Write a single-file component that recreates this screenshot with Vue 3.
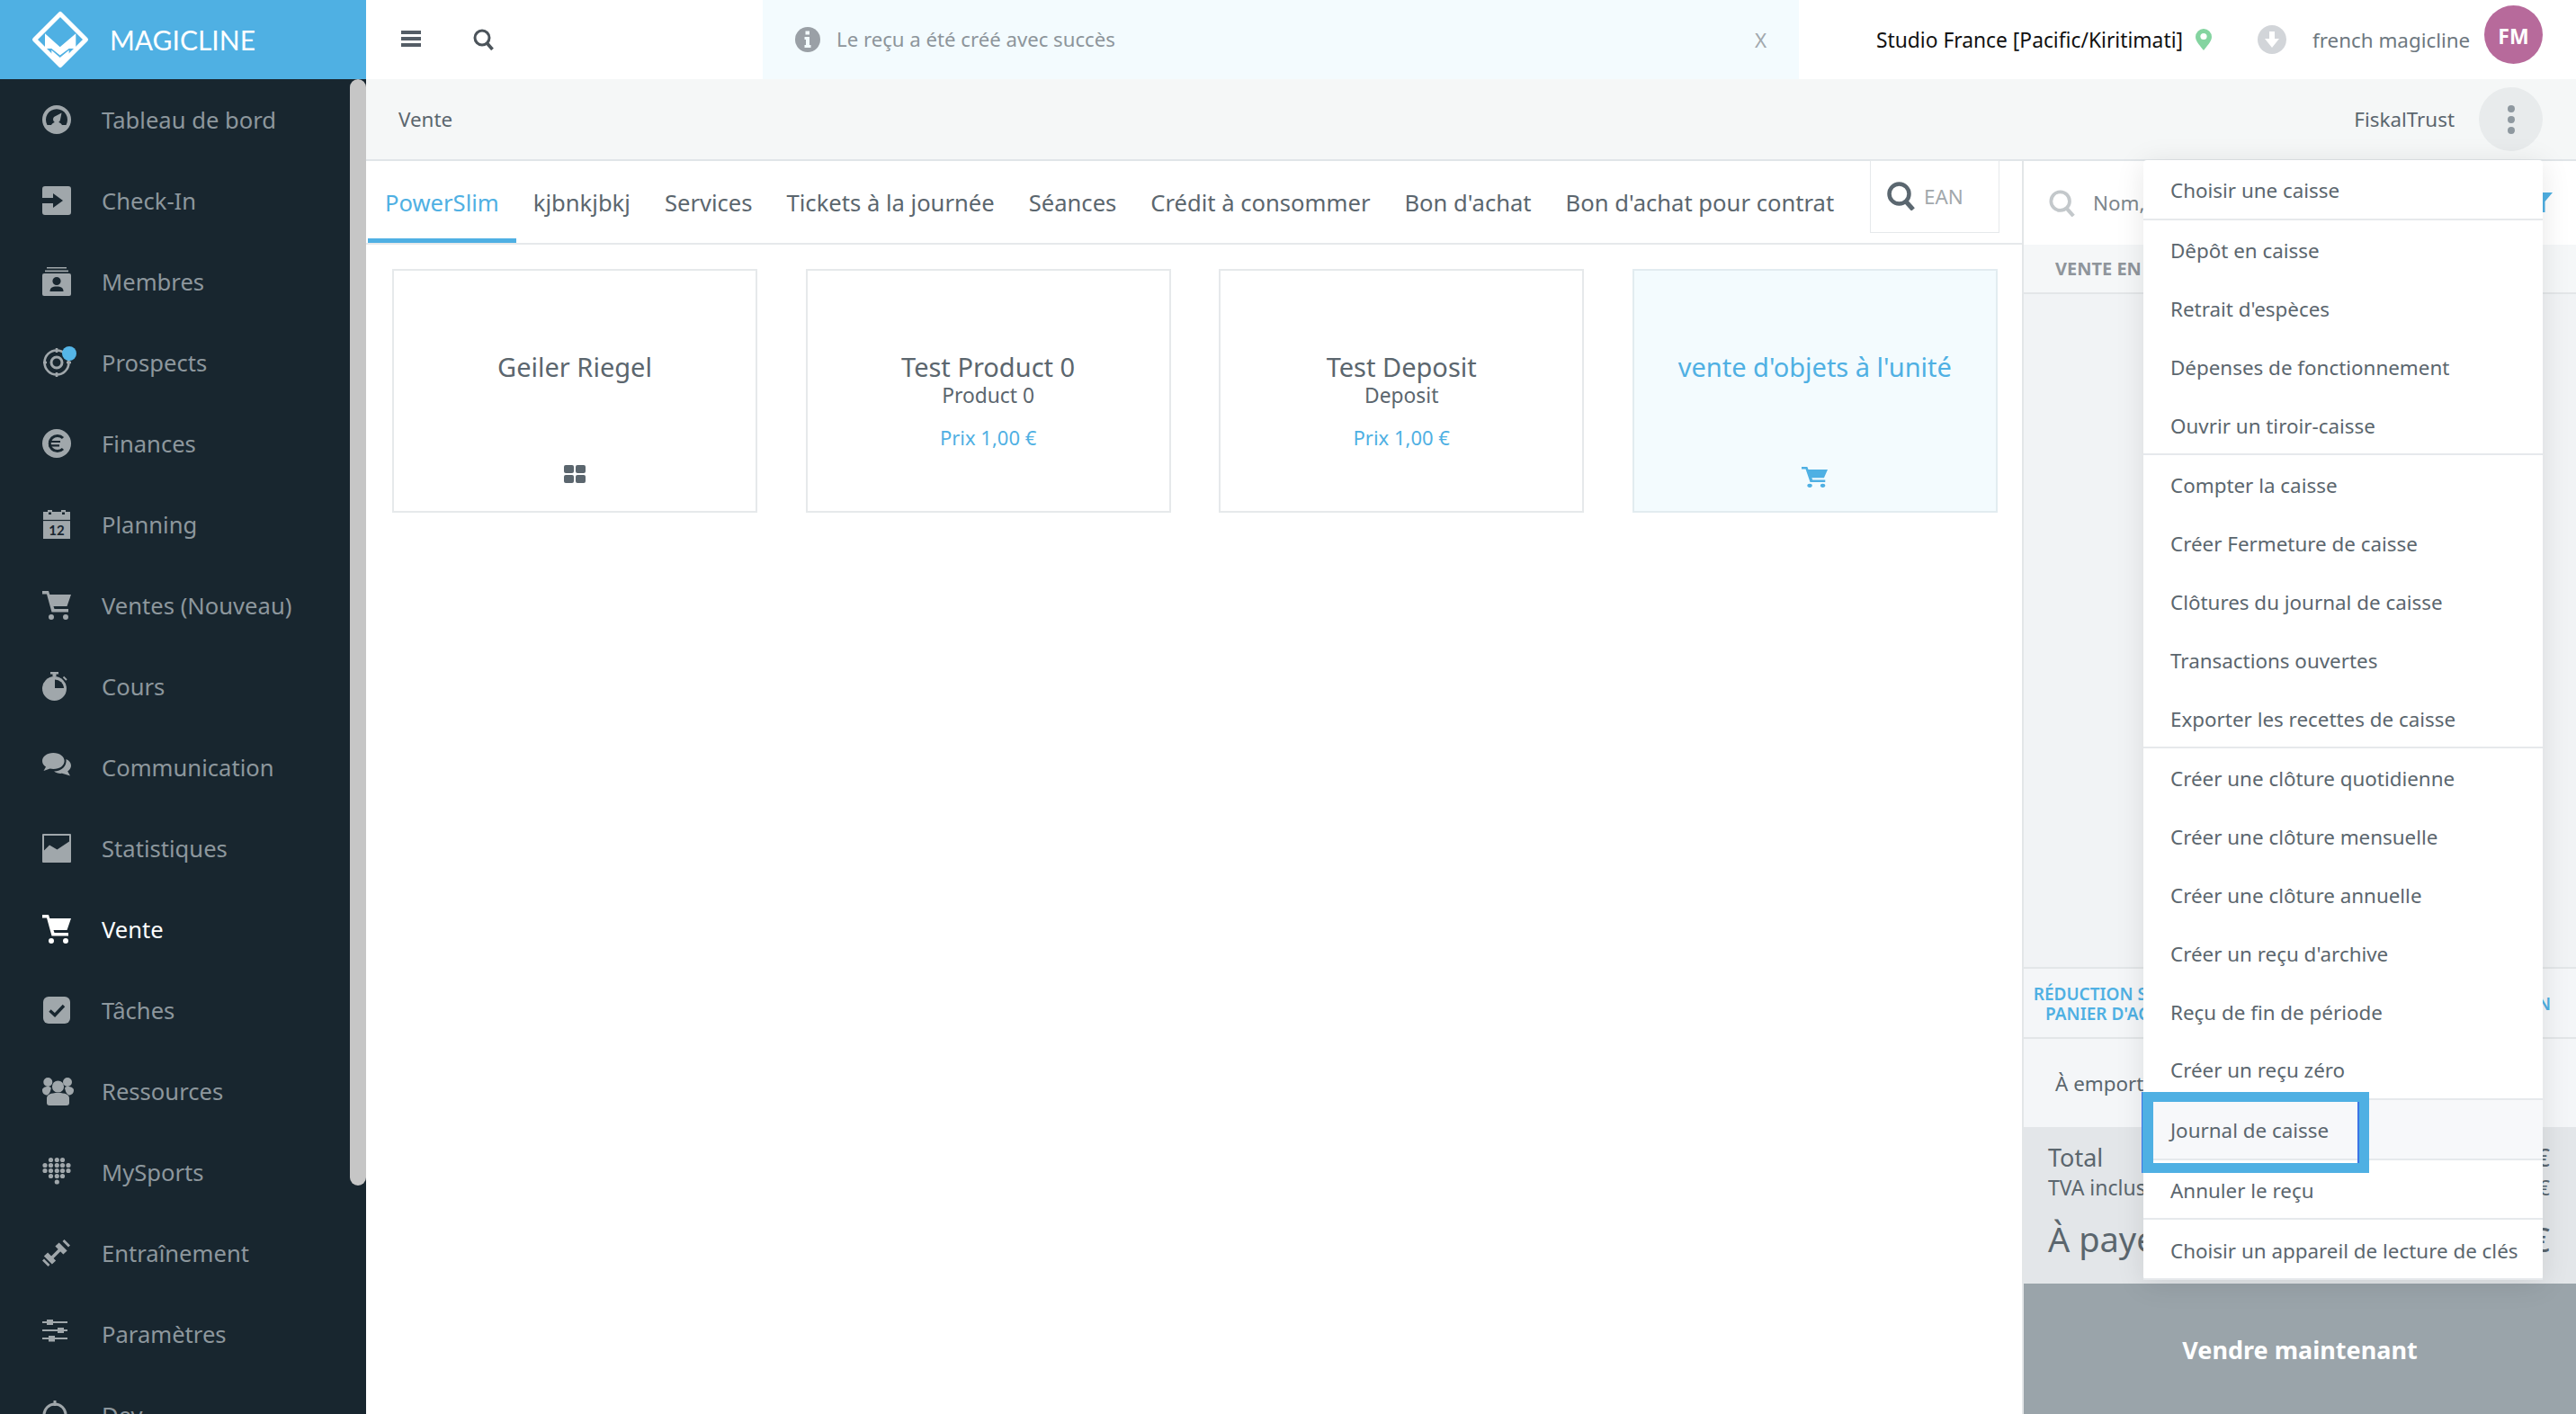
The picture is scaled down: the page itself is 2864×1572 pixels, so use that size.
<script setup>
const DARK = '#18262f'
const c = (x, y, r) => `M${x - r} ${y}a${r} ${r} 0 1 0 ${2 * r} 0a${r} ${r} 0 1 0 ${-2 * r} 0Z`
const cartD = 'M0 0H7L8.3 4H32L27.5 17H12.5L13.5 20H29V23.5H10.5L5 3.5H0Z' + c(10, 29, 3) + c(26, 29, 3)
const dots = [
  [2.5, [9.5, 16.3, 22.5]],
  [8.5, [3, 9.5, 16.3, 22.5, 29]],
  [14.5, [3, 9.5, 16.3, 22.5, 29]],
  [20.5, [9.5, 16.3, 22.5]],
  [27, [16.3]]
].flatMap(([y, xs]) => xs.map((x) => c(x, y, 2.6))).join('')

const icons = {
  gauge: [
    { d: c(16, 16, 16) },
    { d: 'M5.5 22A12 12 0 1 1 26.5 22H22A7 7 0 0 0 10 22Z', fill: DARK },
    { d: 'M21.5 8.5L20 16A4 4 0 1 1 13 13Z' }
  ],
  checkin: [{ d: 'M3 0H29a3 3 0 0 1 3 3V29a3 3 0 0 1-3 3H3a3 3 0 0 1-3-3V19H12V24L23 16L12 8V13H0V3a3 3 0 0 1 3-3Z' }],
  members: [
    { d: 'M5 0H27V1.6H5ZM3 3.6H29V5.2H3Z' },
    { d: 'M2 7H30a2 2 0 0 1 2 2V30a2 2 0 0 1-2 2H2a2 2 0 0 1-2-2V9a2 2 0 0 1 2-2Z' },
    { d: c(16, 15.5, 4.6), fill: DARK },
    { d: 'M8.5 27C8.5 23 11 21.5 16 21.5S23.5 23 23.5 27Z', fill: DARK }
  ],
  prospects: [
    { d: c(16, 16, 13.5), fill: 'none', stroke: 'currentColor', sw: 2.6 },
    { d: c(16, 16, 6), fill: 'none', stroke: 'currentColor', sw: 3 },
    { d: 'M16 0V5M16 27V32M1 16H5M27 16H32', fill: 'none', stroke: 'currentColor', sw: 2.6 }
  ],
  finances: [
    { d: c(16, 16, 16) },
    { d: 'M23 10A8.6 8.6 0 1 0 23 22', fill: 'none', stroke: DARK, sw: 3 },
    { d: 'M7 14H20M7 18.4H19', fill: 'none', stroke: DARK, sw: 2.2 }
  ],
  planning: [
    { d: 'M6 2V0H11V2H21V0H26V2H31V32H1V2Z' },
    { d: 'M1 11.5H31', fill: 'none', stroke: DARK, sw: 1.2 },
    { d: 'M7 2.5H10V5H7ZM22 2.5H25V5H22Z', fill: DARK }
  ],
  cart: [{ d: cartD }],
  cours: [
    { d: 'M9 0H18V2.5H15.5V5H11.5V2.5H9Z' },
    { d: c(13.5, 18.5, 13.5) },
    { d: 'M14 18V8.5A10 10 0 0 1 24 18Z', fill: DARK },
    { d: 'M23.5 5.5L27 9', fill: 'none', stroke: 'currentColor', sw: 1.8 }
  ],
  comm: [
    { d: 'M12.3 0C19.5 0 24.6 4 24.6 9S19.5 18 12.3 18C11 18 9.8 17.9 8.6 17.6L1.5 20L4 15.5C1.5 14 0 11.7 0 9C0 4 5.2 0 12.3 0Z' },
    { d: 'M26.5 7C30 8.5 32 11.2 32 14.2C32 16.8 30.4 19 28.2 20.6L31 25.6L22 22.8C18.6 23.2 15.2 22.2 13 20.4C21 20.5 27.6 15 26.5 7Z' }
  ],
  stats: [
    { d: 'M1 0H31a1 1 0 0 1 1 1V31a1 1 0 0 1-1 1H1a1 1 0 0 1-1-1V1a1 1 0 0 1 1-1Z' },
    { d: 'M2 2H30V8.5L16.5 17.5L8 12.5L2 18.5Z', fill: DARK }
  ],
  tasks: [
    { d: 'M7 1H25a6 6 0 0 1 6 6V25a6 6 0 0 1-6 6H7a6 6 0 0 1-6-6V7a6 6 0 0 1 6-6Z' },
    { d: 'M8.5 16.5L14 21.5L24 11', fill: 'none', stroke: DARK, sw: 3.4 }
  ],
  res: [
    { d: c(6.3, 6, 5) + c(28, 6, 5) + c(17.5, 11, 6.6) },
    { d: 'M0 15C0 12.5 3 11 6.3 11C8 11 9 11.5 9.8 12.5C9.5 15 8.5 19 5.5 20.5C2 20.5 0 18 0 15ZM35 15C35 12.5 32 11 28 11C26.5 11 25.5 11.5 25 12.5C25.5 15 26.5 19 29.5 20.5C33 20.5 35 18 35 15Z' },
    { d: 'M8 32a3 3 0 0 1-3-3V24C5 20 9 18 17.5 18S30 20 30 24V29a3 3 0 0 1-3 3Z' }
  ],
  mysports: [{ d: dots }],
  training: [
    { d: 'M10 22L22 10', fill: 'none', stroke: 'currentColor', sw: 3.6 },
    { d: 'M16.5 6.5L25.5 15.5M4 17.5L13 26.5', fill: 'none', stroke: 'currentColor', sw: 6 },
    { d: 'M23.5 2L30 8.5M1 23.5L7.5 30', fill: 'none', stroke: 'currentColor', sw: 2.8 }
  ],
  params: [
    { d: 'M0 3H28M0 12H28M0 21H28', fill: 'none', stroke: 'currentColor', sw: 1.8 },
    { d: 'M5 0H12V6H5ZM17 9H24V15H17ZM7 18H14V24.5H7Z' }
  ],
  dev: [
    { d: c(14, 16, 12), fill: 'none', stroke: 'currentColor', sw: 3 },
    { d: 'M14 0V6M14 26V32', fill: 'none', stroke: 'currentColor', sw: 3 }
  ]
}

const nav = [
  { label: 'Tableau de bord', icon: 'gauge' },
  { label: 'Check-In', icon: 'checkin' },
  { label: 'Membres', icon: 'members' },
  { label: 'Prospects', icon: 'prospects', dot: true },
  { label: 'Finances', icon: 'finances' },
  { label: 'Planning', icon: 'planning', cal: true },
  { label: 'Ventes (Nouveau)', icon: 'cart' },
  { label: 'Cours', icon: 'cours' },
  { label: 'Communication', icon: 'comm' },
  { label: 'Statistiques', icon: 'stats' },
  { label: 'Vente', icon: 'cart', active: true },
  { label: 'Tâches', icon: 'tasks' },
  { label: 'Ressources', icon: 'res' },
  { label: 'MySports', icon: 'mysports' },
  { label: 'Entraînement', icon: 'training' },
  { label: 'Paramètres', icon: 'params' },
  { label: 'Dev', icon: 'dev' }
]

const tabs = ['PowerSlim', 'kjbnkjbkj', 'Services', 'Tickets à la journée', 'Séances', 'Crédit à consommer', "Bon d'achat", "Bon d'achat pour contrat"]

const cards = [
  { title: 'Geiler Riegel', icon: 'grid' },
  { title: 'Test Product 0', sub: 'Product 0', price: 'Prix 1,00 €' },
  { title: 'Test Deposit', sub: 'Deposit', price: 'Prix 1,00 €' },
  { title: "vente d'objets à l'unité", icon: 'cart', tint: true }
]

const menu = [
  ['Choisir une caisse'],
  ['Dêpôt en caisse', "Retrait d'espèces", 'Dépenses de fonctionnement', 'Ouvrir un tiroir-caisse'],
  ['Compter la caisse', 'Créer Fermeture de caisse', 'Clôtures du journal de caisse', 'Transactions ouvertes', 'Exporter les recettes de caisse'],
  ['Créer une clôture quotidienne', 'Créer une clôture mensuelle', 'Créer une clôture annuelle', "Créer un reçu d'archive", 'Reçu de fin de période', 'Créer un reçu zéro'],
  ['Journal de caisse'],
  ['Annuler le reçu'],
  ['Choisir un appareil de lecture de clés']
]
</script>

<template>
  <div class="app">
    <aside class="sidebar">
      <div class="brand">
        <svg class="logo" viewBox="30 8 74 70">
          <path d="M67 14.5L95.5 43L67 71.5L38.5 43Z" fill="none" stroke="#fff" stroke-width="5" stroke-linejoin="round" />
          <path d="M50 36.3L66.7 51.3L84.3 36.3V53H76.7L66.7 60.5L57.3 53H50Z" fill="#fff" />
          <path d="M57.3 54.7L66.7 63L76.7 54.7V59.7L66.7 68.7L57.3 59.7Z" fill="#fff" />
        </svg>
        <span class="brand-name">MAGICLINE</span>
      </div>
      <nav class="nav">
        <a v-for="item in nav" :key="item.label" class="nav-item" :class="{ active: item.active }">
          <span class="nav-icon">
            <svg class="nav-svg" viewBox="0 0 32 32">
              <path
                v-for="(s, i) in icons[item.icon]"
                :key="i"
                :d="s.d"
                :fill="s.fill || 'currentColor'"
                :stroke="s.stroke"
                :stroke-width="s.sw"
                fill-rule="evenodd"
              />
              <text v-if="item.cal" x="16" y="27.5" class="cal-num" text-anchor="middle">12</text>
            </svg>
            <i v-if="item.dot" class="nav-dot"></i>
          </span>
          <span>{{ item.label }}</span>
        </a>
      </nav>
      <div class="scrollbar"></div>
    </aside>

    <div class="main">
      <header class="topbar">
        <div class="top-tools">
          <div class="burger"><i></i><i></i><i></i></div>
          <svg class="top-search" viewBox="0 0 24 24">
            <circle cx="10" cy="10" r="8" fill="none" stroke="currentColor" stroke-width="3" />
            <path d="M15.5 16L21.5 23" fill="none" stroke="currentColor" stroke-width="3.6" />
          </svg>
        </div>
        <div class="notice">
          <svg class="notice-icon" viewBox="0 0 28 28">
            <circle cx="14" cy="14" r="14" fill="#9aa0a6" />
            <path d="M11.5 4.5H16V8.5H11.5ZM10.5 11H16V20H17.5V23H10.5V20H12V14H10.5Z" fill="#f3fbfe" />
          </svg>
          <span class="notice-text">Le reçu a été créé avec succès</span>
          <span class="notice-close">X</span>
        </div>
        <div class="top-right">
          <span class="studio">Studio France [Pacific/Kiritimati]</span>
          <svg class="pin" viewBox="0 0 18 24">
            <path d="M9 0A9 9 0 0 1 18 9C18 14 12 20 9 24C6 20 0 14 0 9A9 9 0 0 1 9 0Z" fill="#84d4a0" />
            <circle cx="9" cy="8.5" r="3.6" fill="#fff" />
          </svg>
          <svg class="download" viewBox="0 0 32 32">
            <circle cx="16" cy="16" r="16" fill="#d2d5d9" />
            <path d="M13 7H19V15H24L16 25L8 15H13Z" fill="#fff" />
          </svg>
          <span class="user">french magicline</span>
          <span class="avatar">FM</span>
        </div>
      </header>

      <div class="subheader">
        <span>Vente</span>
        <div class="sub-right">
          <span>FiskalTrust</span>
          <span class="kebab"><i></i><i></i><i></i></span>
        </div>
      </div>

      <div class="content">
        <section class="catalog">
          <div class="tabs">
            <a v-for="(t, i) in tabs" :key="t" class="tab" :class="{ current: i === 0 }">{{ t }}</a>
            <div class="ean">
              <svg class="ean-icon" viewBox="0 0 32 32">
                <circle cx="13.5" cy="13.5" r="11" fill="none" stroke="currentColor" stroke-width="4.5" />
                <path d="M21 22L29 31" fill="none" stroke="currentColor" stroke-width="5" />
              </svg>
              <span>EAN</span>
            </div>
          </div>
          <div class="cards">
            <article v-for="card in cards" :key="card.title" class="card" :class="{ tint: card.tint }">
              <div class="card-title">{{ card.title }}</div>
              <div v-if="card.sub" class="card-sub">{{ card.sub }}</div>
              <div v-if="card.price" class="card-price">{{ card.price }}</div>
              <svg v-if="card.icon === 'grid'" class="card-grid" viewBox="0 0 24 20">
                <rect width="11" height="9" rx="2" fill="currentColor" />
                <rect x="13" width="11" height="9" rx="2" fill="currentColor" />
                <rect y="11" width="11" height="9" rx="2" fill="currentColor" />
                <rect x="13" y="11" width="11" height="9" rx="2" fill="currentColor" />
              </svg>
              <svg v-if="card.icon === 'cart'" class="card-cart" viewBox="0 0 32 32" preserveAspectRatio="none">
                <path :d="cartD" fill="currentColor" />
              </svg>
            </article>
          </div>
        </section>

        <section class="cart-panel">
          <div class="cart-search">
            <svg class="cart-search-icon" viewBox="0 0 32 32">
              <circle cx="13.5" cy="13.5" r="11" fill="none" stroke="currentColor" stroke-width="4" />
              <path d="M21 22L29 31" fill="none" stroke="currentColor" stroke-width="4.5" />
            </svg>
            <span class="cart-search-text">Nom, numéro</span>
            <svg class="funnel" viewBox="0 0 24 22">
              <path d="M0 0H24L15.5 10V22H8.5V10Z" fill="#4fb0e3" />
            </svg>
          </div>
          <div class="cart-head">VENTE EN COURS</div>
          <div class="cart-body"></div>
          <div class="cart-actions">
            <span class="action-left">RÉDUCTION SUR LE PANIER D'ACHAT</span>
            <span class="action-right">PROMOTION</span>
          </div>
          <div class="cart-takeaway">À emporter</div>
          <div class="cart-totals">
            <div class="total-row total"><span>Total</span><span>1,00 €</span></div>
            <div class="total-row tva"><span>TVA incluse</span><span>0,20 €</span></div>
            <div class="total-row pay"><span>À payer</span><span>1,00 €</span></div>
          </div>
          <button class="sell">Vendre maintenant</button>
        </section>

        <div class="dropdown">
          <div v-for="(group, g) in menu" :key="g" class="menu-group" :class="{ hover: g === 4 }">
            <div v-for="entry in group" :key="entry" class="menu-item">{{ entry }}</div>
          </div>
          <div class="focus-box"></div>
        </div>
      </div>
    </div>
  </div>
</template>

<style>
html, body { margin: 0; overflow: hidden; background: #fff; }
</style>

<style scoped>
.app {
  display: flex;
  width: 2864px;
  height: 1572px;
  overflow: hidden;
  font-family: "Noto Sans", "Open Sans", sans-serif;
  font-size: 22.4px;
  color: #5b666e;
}
i { display: block; font-style: normal; }

/* sidebar */
.sidebar {
  position: relative;
  flex: 0 0 407px;
  height: 100%;
  background: #18262f;
  overflow: hidden;
}
.brand {
  display: flex;
  align-items: center;
  height: 88px;
  background: #4fb0e3;
  padding-left: 30px;
  box-sizing: border-box;
}
.logo { width: 74px; height: 70px; }
.brand-name {
  margin-left: 18px;
  font-family: "Lato", sans-serif;
  font-size: 30px;
  color: #fff;
}
.nav-item {
  display: flex;
  align-items: center;
  height: 90px;
  padding-left: 47px;
  font-size: 25.6px;
  color: #8d979d;
}
.nav-item.active { color: #fff; }
.nav-icon {
  position: relative;
  flex: 0 0 66px;
  height: 32px;
  color: #a0a7ab;
}
.active .nav-icon { color: #fff; }
.nav-svg { display: block; width: 32px; height: 32px; overflow: visible; }
.cal-num { font-family: "Lato", sans-serif; font-size: 15px; font-weight: 700; fill: #18262f; }
.nav-dot {
  position: absolute;
  left: 22px;
  top: -2px;
  width: 16px;
  height: 16px;
  border-radius: 50%;
  background: #55b6e8;
}
.scrollbar {
  position: absolute;
  right: 0;
  top: 88px;
  width: 18px;
  height: 1230px;
  background: #c6c6c6;
  border-radius: 9px;
}

/* top */
.main { flex: 1; min-width: 0; display: flex; flex-direction: column; }
.topbar { display: flex; height: 88px; flex: none; }
.top-tools {
  flex: 0 0 441px;
  display: flex;
  align-items: center;
  padding-left: 39px;
  box-sizing: border-box;
  color: #4b535a;
}
.burger { width: 22px; }
.burger i { height: 4px; background: #545d66; margin-bottom: 3px; }
.top-search { width: 24px; height: 24px; margin-left: 58px; color: #4b535a; }
.notice {
  flex: 0 0 1152px;
  display: flex;
  align-items: center;
  background: #f3fbfe;
  padding-left: 36px;
  box-sizing: border-box;
  color: #8d959b;
}
.notice-icon { width: 28px; height: 28px; flex: none; }
.notice-text { margin-left: 18px; font-size: 22.2px; margin-top: -1px; }
.notice-close { margin-left: auto; margin-right: 36px; color: #a1a8ad; }
.top-right { flex: 1; display: flex; align-items: center; padding-left: 86px; position: relative; }
.studio { color: #111; white-space: nowrap; font-size: 22.8px; }
.pin { width: 18px; height: 24px; margin-left: 14px; flex: none; }
.download { width: 32px; height: 32px; margin-left: 51px; flex: none; }
.user { margin-left: 29px; color: #6e787f; white-space: nowrap; }
.avatar {
  position: absolute;
  right: 37px;
  top: 6px;
  width: 65px;
  height: 65px;
  padding-top: 2px;
  box-sizing: border-box;
  border-radius: 50%;
  background: #b76a9b;
  color: #fff;
  font-weight: 700;
  display: flex;
  align-items: center;
  justify-content: center;
  font-size: 23px;
}

/* subheader */
.subheader {
  flex: none;
  height: 91px;
  box-sizing: border-box;
  border-bottom: 2px solid #e0e5e8;
  background: #f5f7f7;
  display: flex;
  align-items: center;
  justify-content: space-between;
  padding: 0 37px 0 36px;
  color: #5b666e;
}
.sub-right { display: flex; align-items: center; }
.kebab {
  margin-left: 27px;
  width: 71px;
  height: 71px;
  border-radius: 50%;
  background: #e8ebec;
  display: flex;
  flex-direction: column;
  align-items: center;
  justify-content: center;
  gap: 4px;
}
.kebab i { width: 8px; height: 8px; border-radius: 50%; background: #8e989f; }

/* content */
.content { position: relative; flex: 1; min-height: 0; display: flex; }
.catalog { flex: 0 0 1841px; min-width: 0; }
.tabs {
  display: flex;
  align-items: center;
  height: 93px;
  box-sizing: border-box;
  border-bottom: 2px solid #e6e9eb;
  padding-left: 2px;
  position: relative;
}
.tab {
  height: 91px;
  box-sizing: border-box;
  display: flex;
  align-items: center;
  padding: 2px 19px 0;
  font-size: 25.6px;
  color: #5b666e;
  white-space: nowrap;
}
.tab.current { color: #4fb0e3; box-shadow: inset 0 -5px 0 #4fb0e3; }
.ean {
  position: absolute;
  left: 1672px;
  top: -1px;
  width: 144px;
  height: 81px;
  box-sizing: border-box;
  border: 1px solid #e6e9eb;
  background: #fff;
  display: flex;
  align-items: center;
  padding-left: 18px;
  color: #a2a8ac;
}
.ean-icon { width: 32px; height: 32px; color: #5b6770; margin-right: 9px; flex: none; margin-top: -2px; }

.cards {
  display: grid;
  grid-template-columns: repeat(4, 406px);
  column-gap: 53.6px;
  padding: 27px 0 0 29px;
}
.card {
  position: relative;
  height: 271px;
  box-sizing: border-box;
  border: 2px solid #e6e9eb;
  padding-top: 88px;
  display: flex;
  flex-direction: column;
  align-items: center;
  font-size: 22.8px;
}
.card.tint { background: #f3fbfe; color: #4fb0e3; border-color: #e2ecf0; }
.card-title { font-size: 29px; line-height: 38px; white-space: nowrap; }
.card-sub { line-height: 28px; margin-top: -1px; }
.card-price { line-height: 28px; margin-top: 18px; color: #4fb0e3; font-size: 22px; }
.card-grid { position: absolute; bottom: 31px; width: 24px; height: 20px; color: #5b666e; }
.card-cart { position: absolute; bottom: 26px; width: 29px; height: 23px; color: #4fb0e3; }

/* cart panel */
.cart-panel {
  flex: 1;
  min-width: 0;
  height: 1393px;
  border-left: 2px solid #e3e6e8;
  display: flex;
  flex-direction: column;
  background: #f1f3f5;
}
.cart-search {
  flex: none;
  height: 93px;
  background: #fff;
  display: flex;
  align-items: center;
  padding: 0 26px 0 28px;
  color: #7c868c;
}
.cart-search-icon { width: 30px; height: 30px; color: #c3c8cb; flex: none; }
.cart-search-text { margin-left: 19px; white-space: nowrap; }
.funnel { width: 24px; height: 22px; margin-left: auto; margin-top: -2px; flex: none; }
.cart-head {
  flex: none;
  height: 55px;
  box-sizing: border-box;
  border-bottom: 2px solid #e3e6e8;
  background: #f5f7f8;
  display: flex;
  align-items: center;
  padding-left: 35px;
  font-size: 20px;
  font-weight: 700;
  color: #8f959b;
  white-space: nowrap;
}
.cart-body { flex: 1; min-height: 0; }
.cart-actions {
  flex: none;
  height: 80px;
  box-sizing: border-box;
  border-top: 2px solid #e3e6e8;
  border-bottom: 2px solid #e3e6e8;
  background: #f4f6f8;
  display: flex;
  align-items: center;
  justify-content: space-between;
  font-size: 19px;
  line-height: 22px;
  font-weight: 600;
  color: #4fb0e3;
  padding: 2px 28px 0 5px;
}
.action-left { width: 190px; text-align: center; }
.cart-takeaway {
  flex: none;
  height: 98px;
  box-sizing: border-box;
  background: #f4f6f8;
  padding: 34px 0 0 35px;
  line-height: 32px;
}
.cart-totals {
  flex: none;
  height: 174px;
  box-sizing: border-box;
  background: #e3e6e9;
  padding: 16px 29px 0 27px;
}
.total-row { display: flex; justify-content: space-between; white-space: nowrap; }
.total { font-size: 27px; line-height: 36px; }
.tva { font-size: 23px; line-height: 30px; }
.pay { font-size: 38px; line-height: 52px; margin-top: 16px; }
.sell {
  flex: none;
  height: 145px;
  border: none;
  background: #9aa4aa;
  color: #fff;
  font-family: inherit;
  font-size: 27px;
  font-weight: 700;
  padding: 2px 0 0;
}

/* dropdown */
.dropdown {
  position: absolute;
  left: 1976px;
  top: -1px;
  width: 444px;
  background: #fff;
  border-radius: 4px;
  box-shadow: 0 4px 32px rgba(0, 0, 0, 0.1);
  z-index: 5;
}
.menu-group { border-bottom: 2px solid #e6e9ec; }
.menu-group.hover { background: #f7f8fa; }
.menu-item {
  height: 64.8px;
  padding: 3px 0 0 30px;
  box-sizing: border-box;
  display: flex;
  align-items: center;
  white-space: nowrap;
  color: #5b666e;
}
.focus-box {
  position: absolute;
  left: -1px;
  top: 1036px;
  width: 252px;
  height: 90px;
  box-sizing: border-box;
  border: 11px solid #4fb0e3;
  border-left-width: 12px;
  box-shadow: -1px 0 0 #3d74e6, inset -2px 0 0 #3d74e6;
}
</style>
